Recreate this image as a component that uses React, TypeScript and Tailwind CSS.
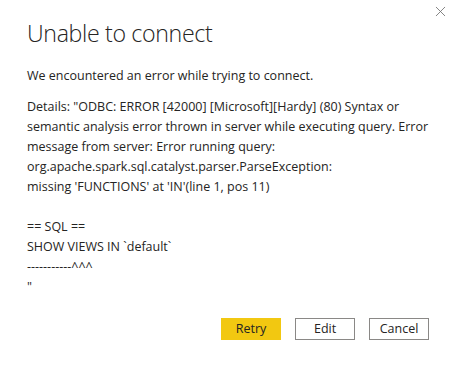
import { X } from 'lucide-react';

export default function App() {
  const font = { fontFamily: '"Segoe UI", "Open Sans", "Liberation Sans", sans-serif' };

  return (
    <div className="w-[458px] h-[371px] bg-white flex" style={font}>
      <div className="relative flex-1 flex flex-col border-r border-[#c6c6c6] mr-px">
        {/* Close */}
        <button className="absolute top-[1px] right-[7px] p-0.5 text-[#707070]" aria-label="Close">
          <X className="w-[17px] h-[17px]" strokeWidth={1.2} />
        </button>

        <div className="pl-[27px] pr-[30px] pt-[17px]">
          <h1 className="text-[23.2px] font-light text-[#252423] leading-[32px] tracking-[-0.35px]">
            Unable to connect
          </h1>

          <p className="mt-[17px] text-[12.5px] leading-[20px] text-[#252423]">
            We encountered an error while trying to connect.
          </p>

          <div className="mt-[11px] text-[12.5px] leading-[20px] text-[#252423] whitespace-nowrap">
            <div>Details: "ODBC: ERROR [42000] [Microsoft][Hardy] (80) Syntax or</div>
            <div>semantic analysis error thrown in server while executing query. Error</div>
            <div>message from server: Error running query:</div>
            <div>org.apache.spark.sql.catalyst.parser.ParseException:</div>
            <div>missing 'FUNCTIONS' at 'IN'(line 1, pos 11)</div>
            <div>&nbsp;</div>
            <div>== SQL ==</div>
            <div>SHOW VIEWS IN `default`</div>
            <div>-----------^^^</div>
            <div>"</div>
          </div>
        </div>

        {/* Actions */}
        <div className="flex justify-end gap-[14px] pr-[29px] mt-[21px]">
          <button className="w-[60px] h-[22px] bg-[#f2c811] text-[12.5px] text-[#252423]">Retry</button>
          <button className="w-[60px] h-[22px] border border-[#8a8886] text-[12.5px] text-[#252423]">Edit</button>
          <button className="w-[60px] h-[22px] border border-[#8a8886] text-[12.5px] text-[#252423]">Cancel</button>
        </div>
      </div>
    </div>
  );
}
